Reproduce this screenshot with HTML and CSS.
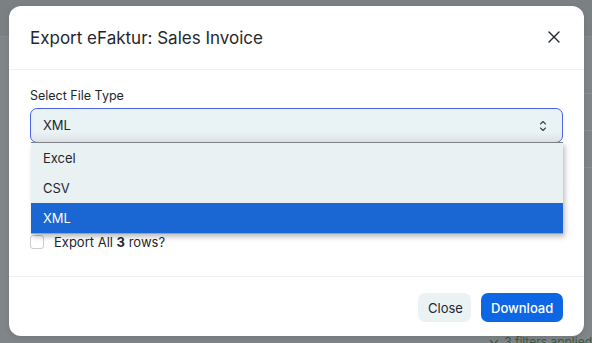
FILE: index.html
```html
<!DOCTYPE html>
<html lang="en">

<head>
  <title>Export eFaktur</title>
  <link rel="stylesheet" href="styles.css">
</head>

<body>
  <div class="page">
    <div class="navbar">
      <div class="search">
        <svg width="12" height="12" viewBox="0 0 12 12"><circle cx="5" cy="5" r="4" fill="none" stroke="#3d4144" stroke-width="1.2"/><path d="M8 8l3 3" stroke="#3d4144" stroke-width="1.2"/></svg>
        <span>Search or type a command</span>
      </div>
    </div>
    <div class="page-body">
      <div class="side"></div>
      <div class="list">
        <div class="list-row"></div>
        <div class="list-row"></div>
        <div class="list-row"></div>
        <div class="filters">
          <svg width="10" height="8" viewBox="0 0 10 8"><path d="M1 2l4 4 4-4" fill="none" stroke="#3c5c3a" stroke-width="1.2"/></svg>
          <span>3 filters applied</span>
        </div>
      </div>
    </div>
  </div>

  <div class="overlay">
    <div class="modal">
      <div class="modal-header">
        <h4 class="modal-title">Export eFaktur: Sales Invoice</h4>
        <button class="btn-close">
          <svg width="12" height="12" viewBox="0 0 12 12"><path d="M1 1l10 10M11 1L1 11" stroke="#1f272e" stroke-width="1.4" stroke-linecap="round"/></svg>
        </button>
      </div>
      <div class="modal-body">
        <label class="control-label">Select File Type</label>
        <div class="select-wrap">
          <div class="select">XML</div>
          <svg class="select-icon" width="8" height="12" viewBox="0 0 8 12"><path d="M1.5 4L4 1.5 6.5 4M1.5 8L4 10.5 6.5 8" fill="none" stroke="#3d4144" stroke-width="1.1" stroke-linecap="round" stroke-linejoin="round"/></svg>
          <div class="dropdown">
            <div class="option">Excel</div>
            <div class="option">CSV</div>
            <div class="option selected">XML</div>
          </div>
        </div>
        <div class="hidden-fields"></div>
        <label class="checkbox">
          <span class="check"></span>
          <span>Export All <b>3</b> rows?</span>
        </label>
      </div>
      <div class="modal-footer">
        <button class="btn btn-default">Close</button>
        <button class="btn btn-primary">Download</button>
      </div>
    </div>
  </div>
</body>

</html>
```

FILE: styles.css
```css
body {
  margin: 0;
  font-family: "Inter", "Noto Sans", sans-serif;
  background-color: #7f8588;
  width: 592px;
  height: 343px;
  overflow: hidden;
  position: relative;
}

.page {
  height: 343px;
}

.navbar {
  height: 36px;
  border-bottom: 1px solid #868b8e;
  background-color: #7b8083;
  display: flex;
  justify-content: flex-end;
}

.search {
  display: flex;
  align-items: center;
  gap: 8px;
  margin-top: -10px;
  width: 230px;
  font-size: 13px;
  color: #3d4144;
}

.page-body {
  display: flex;
  height: 306px;
}

.side {
  width: 300px;
}

.list {
  flex: 1;
  display: flex;
  flex-direction: column;
  padding-top: 20px;
}

.list-row {
  height: 36px;
  border-bottom: 1px solid #8c9093;
}

.filters {
  margin-top: auto;
  margin-left: 204px;
  margin-bottom: -6px;
  display: flex;
  align-items: center;
  gap: 5px;
  font-size: 12px;
  color: #3c5c3a;
  white-space: nowrap;
}

.overlay {
  position: absolute;
  left: 9px;
  top: 6px;
}

.modal {
  width: 575px;
  height: 330px;
  background-color: #ffffff;
  border-radius: 12px;
  display: flex;
  flex-direction: column;
  box-shadow: 0 2px 6px rgba(0, 0, 0, 0.1);
}

.modal-header {
  display: flex;
  align-items: center;
  justify-content: space-between;
  height: 63px;
  padding: 0 20px 0 21px;
  border-bottom: 1px solid #eef0f1;
}

.modal-title {
  margin: 0;
  font-size: 17px;
  font-weight: 400;
  color: #1f272e;
}

.btn-close {
  border: none;
  background: none;
  padding: 4px;
  display: flex;
  margin-top: -1px;
}

.modal-body {
  flex: 1;
  padding: 18px 21px 0 21px;
  border-bottom: 1px solid #eef0f1;
}

.control-label {
  display: block;
  font-size: 12.5px;
  color: #1f272e;
  margin-bottom: 5px;
  line-height: 15px;
}

.select-wrap {
  position: relative;
}

.select {
  height: 33px;
  border: 1px solid #4b63e6;
  border-radius: 7px;
  background: linear-gradient(#e9f2f4 70%, #dde3e6);
  font-size: 13px;
  color: #1f272e;
  line-height: 33px;
  padding-left: 12px;
}

.select-icon {
  position: absolute;
  right: 16px;
  top: 12px;
}

.dropdown {
  position: absolute;
  top: 34px;
  left: 1px;
  right: 0;
  background-color: #e9f1f3;
  border-top: 1px solid #7d8084;
  border-bottom: 1px solid #9ea2a5;
  box-shadow: 2px 3px 5px rgba(0, 0, 0, 0.25);
}

.option {
  height: 30px;
  line-height: 30px;
  font-size: 13px;
  color: #1f272e;
  padding-left: 12px;
}

.option.selected {
  background-color: #1a66d2;
  color: #ffffff;
}

.hidden-fields {
  height: 91px;
}

.checkbox {
  display: flex;
  align-items: center;
  gap: 10px;
  font-size: 13px;
  line-height: 16px;
  color: #1f272e;
}

.check {
  width: 12px;
  height: 12px;
  border: 1px solid #c8cdd0;
  border-radius: 3px;
  background-color: #ffffff;
}

.modal-footer {
  height: 59px;
  display: flex;
  justify-content: flex-end;
  align-items: flex-start;
  gap: 10px;
  padding: 16px 21px 0 0;
  box-sizing: border-box;
}

.btn {
  height: 29px;
  border: none;
  border-radius: 7px;
  font-family: "Inter", "Noto Sans", sans-serif;
  font-size: 13px;
  padding: 0 10px;
}

.btn-default {
  background-color: #eaf2f4;
  color: #1f272e;
  width: 53px;
}

.btn-primary {
  background-color: #0d66e4;
  color: #ffffff;
  width: 82px;
  font-weight: 500;
}
```
